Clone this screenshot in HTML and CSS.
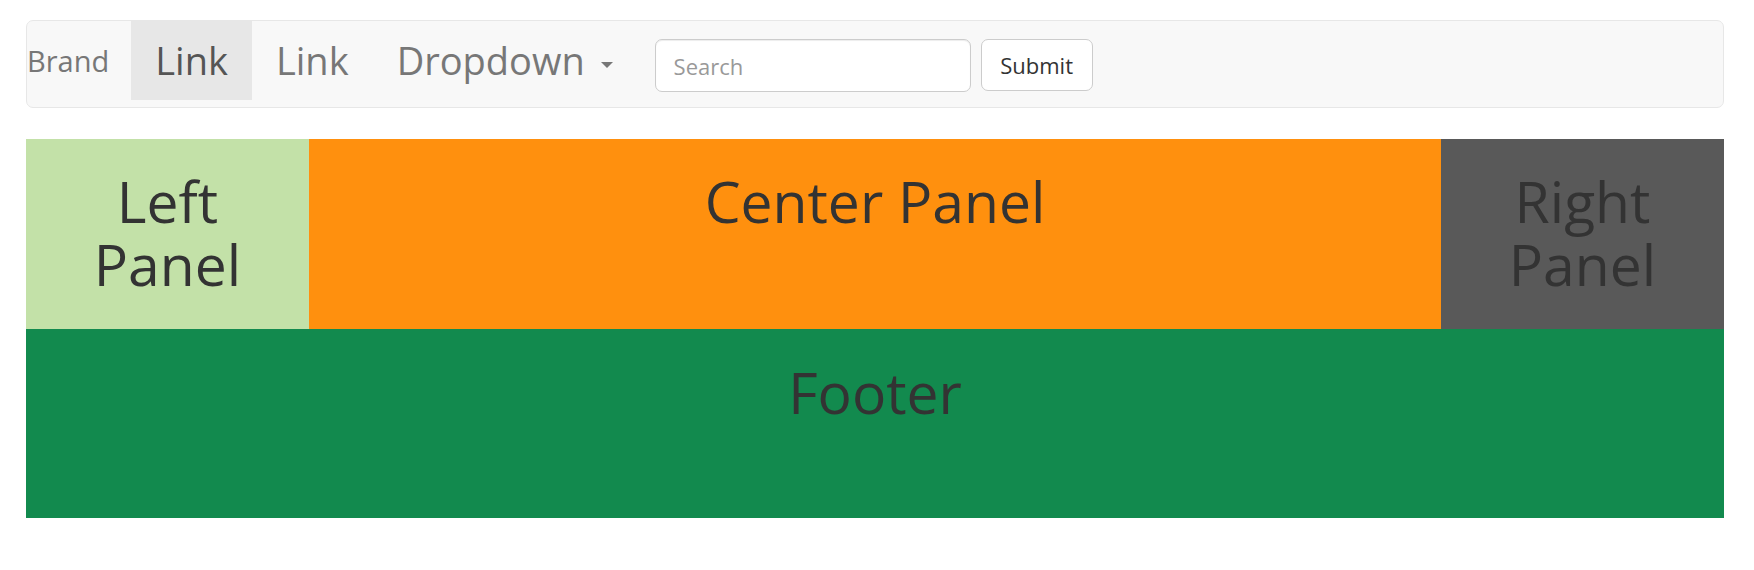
FILE: index.html
```html
<!DOCTYPE html>
<html lang="en">
<head>
    <meta charset="UTF-8">
    <title>Holy Grail</title>
    <link rel="stylesheet" href="styles.css">
</head>
<body>

    <!-- Navbar -->
    <nav class="navbar">
        <a href="#" class="navbar__brand">Brand</a>
        <ul class="navbar__nav">
            <li><a href="#" class="navbar__link navbar__link--active">Link</a></li>
            <li><a href="#" class="navbar__link">Link</a></li>
            <li><a href="#" class="navbar__link">Dropdown <span class="caret"></span></a></li>
        </ul>
        <form class="navbar__form">
            <input type="text" class="navbar__search" placeholder="Search">
            <button type="submit" class="navbar__submit">Submit</button>
        </form>
    </nav>

    <!-- Panels -->
    <div class="panels">
        <div class="panel panel--left"><h1>Left Panel</h1></div>
        <div class="panel panel--center"><h1>Center Panel</h1></div>
        <div class="panel panel--right"><h1>Right Panel</h1></div>
    </div>

    <!-- Footer -->
    <footer class="footer">
        <h1>Footer</h1>
    </footer>

</body>
</html>
```

FILE: styles.css
```css
body {
    font-family: "Open Sans", Arial, sans-serif;
    margin: 20px 30px 0 26px;
    padding: 0;
    background-color: #fff;
    color: #333;
}

/* Navbar */
.navbar {
    display: flex;
    align-items: flex-start;
    height: 86px;
    background-color: #f8f8f8;
    border: 1px solid #e7e7e7;
    border-radius: 7px;
    margin-bottom: 31px;
}
.navbar__brand {
    font-size: 29px;
    line-height: 44px;
    padding: 18px 22px 0 0;
    color: #777;
    text-decoration: none;
}
.navbar__nav {
    display: flex;
    list-style: none;
    margin: 0;
    padding: 0;
}
.navbar__link {
    display: block;
    font-size: 38px;
    line-height: 55px;
    padding: 12px 24px 12px;
    color: #777;
    text-decoration: none;
}
.navbar__link--active {
    background-color: #e7e7e7;
    color: #555;
}
.caret {
    display: inline-block;
    width: 0;
    height: 0;
    margin-left: 6px;
    vertical-align: middle;
    border-top: 6px solid #777;
    border-left: 6px solid transparent;
    border-right: 6px solid transparent;
}
.navbar__form {
    display: flex;
    align-items: flex-start;
    gap: 10px;
    margin: 18px 0 0 18px;
}
.navbar__search {
    box-sizing: border-box;
    width: 316px;
    height: 53px;
    padding: 0 18px;
    font-family: inherit;
    font-size: 22px;
    color: #555;
    border: 1px solid #ccc;
    border-radius: 7px;
    box-shadow: inset 0 1px 1px rgba(0, 0, 0, 0.075);
    background-color: #fff;
}
.navbar__search::placeholder {
    color: #999;
}
.navbar__submit {
    box-sizing: border-box;
    width: 112px;
    height: 52px;
    font-family: inherit;
    font-size: 22px;
    color: #333;
    background-color: #fff;
    border: 1px solid #ccc;
    border-radius: 7px;
    cursor: pointer;
}

/* Panels */
h1 {
    font-size: 57px;
    font-weight: 400;
    line-height: 63px;
    margin: 0;
    text-align: center;
}
.panels {
    display: grid;
    grid-template-columns: 1fr 4fr 1fr;
}
.panel {
    padding: 31px 26px 33px;
}
.panel--left {
    background-color: #c3e1a8;
}
.panel--center {
    background-color: #ff900e;
}
.panel--right {
    background-color: #595959;
}

.footer {
    height: 189px;
    box-sizing: border-box;
    padding-top: 32px;
    background-color: #128a4e;
}
```
